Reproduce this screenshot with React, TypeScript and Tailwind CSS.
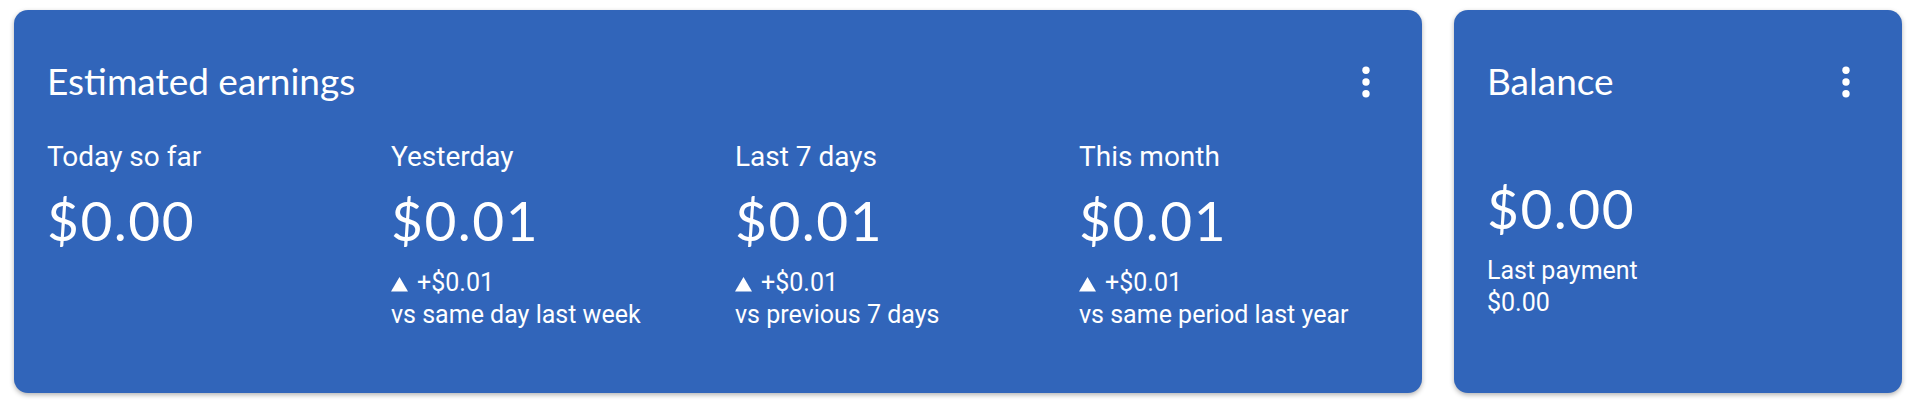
import React from 'react';

const stats = [
  { label: "Today so far", value: "$0.00" },
  { label: "Yesterday", value: "$0.01", delta: "+$0.01", compare: "vs same day last week" },
  { label: "Last 7 days", value: "$0.01", delta: "+$0.01", compare: "vs previous 7 days" },
  { label: "This month", value: "$0.01", delta: "+$0.01", compare: "vs same period last year" },
];

const MoreIcon = () => (
  <svg width="48" height="48" viewBox="0 0 48 48" fill="white" className="shrink-0">
    <circle cx="24" cy="12.3" r="3.7" />
    <circle cx="24" cy="24" r="3.7" />
    <circle cx="24" cy="35.7" r="3.7" />
  </svg>
);

const CardHeader = ({ title }: { title: string }) => (
  <div className="flex items-center justify-between h-12">
    <h2 className="font-['Lato',sans-serif] text-[37px] leading-[48px] mb-[3px] text-white">{title}</h2>
    <MoreIcon />
  </div>
);

export default function App() {
  return (
    <div className="h-[406px] bg-white flex items-start pt-[10px] pl-[14px] gap-8 font-['Roboto',sans-serif] text-white">
      <section className="w-[1408px] h-[383px] bg-[#3165ba] rounded-[14px] shadow-[0_2px_5px_rgba(0,0,0,0.3)] pt-12 pl-[33px] pr-8">
        <CardHeader title="Estimated earnings" />
        <div className="grid grid-cols-[repeat(4,344px)] mt-[33px]">
          {stats.map((s, i) => (
            <div key={i} className="flex flex-col">
              <span className="text-[28px] leading-[36px]">{s.label}</span>
              <span className="font-['Lato',sans-serif] text-[55px] leading-[64px] tracking-[1.5px] mt-[13px]">{s.value}</span>
              {s.delta && (
                <div className="mt-[15px] text-[25px] leading-[32px]">
                  <div className="flex items-center">
                    <svg width="17" height="15" viewBox="0 0 17 15" fill="white" className="mr-[9px] mt-[2px]">
                      <polygon points="8.5,0 17,14.5 0,14.5" />
                    </svg>
                    <span>{s.delta}</span>
                  </div>
                  <div>{s.compare}</div>
                </div>
              )}
            </div>
          ))}
        </div>
      </section>
      <section className="w-[448px] h-[383px] bg-[#3165ba] rounded-[14px] shadow-[0_2px_5px_rgba(0,0,0,0.3)] pt-12 pl-[33px] pr-8">
        <CardHeader title="Balance" />
        <div className="flex flex-col mt-[70px]">
          <span className="font-['Lato',sans-serif] text-[55px] leading-[64px] tracking-[1.5px]">$0.00</span>
          <span className="mt-[15px] text-[25px] leading-[32px]">Last payment</span>
          <span className="text-[25px] leading-[32px]">$0.00</span>
        </div>
      </section>
    </div>
  );
}
